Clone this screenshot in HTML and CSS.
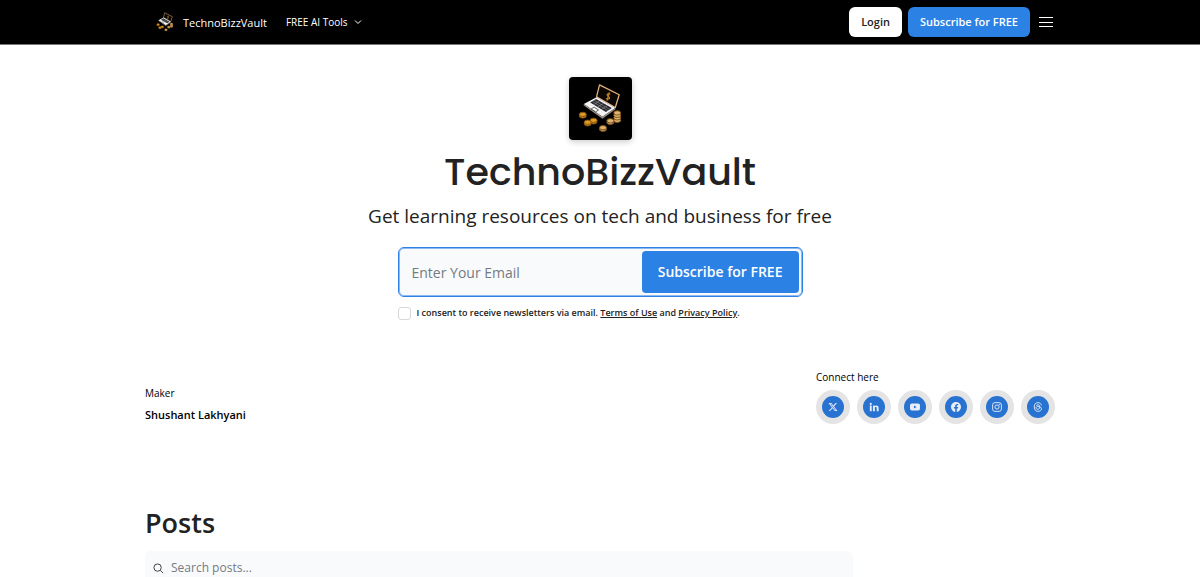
FILE: index.html
```html
<!DOCTYPE html>
<html lang="en">
  <head>
    <meta charset="UTF-8" />
    <meta name="viewport" content="width=device-width, initial-scale=1.0" />
    <title>TechnoBizzVault</title>
    <link rel="stylesheet" href="styles.css">
  </head>
  <body>
    <svg class="sprite" aria-hidden="true">
      <symbol id="laptop" viewBox="0 0 64 64">
        <path d="M31 8 51 18 47 31 28 20z" fill="#0b0704" stroke="#e3b27c" stroke-width="1.3" stroke-linejoin="round" />
        <path d="M42 17.500c-3-1.600-4.500 1-2 2.300s1 3.800-2.500 2M41 15.500l-2.400 8.500" fill="none" stroke="#c4801f" stroke-width="1.200" />
        <path d="M28 20.500 47 31.500 34 40.500 15 27.500z" fill="#f4f4f4" />
        <path d="M15 27.500v1.500L34 42.500 47 33v-1.500L34 40.500z" fill="#9a8d80" />
        <path d="M27.500 22.300 43.500 31.500 37.500 35.500 21.500 26z" fill="#26262c" />
        <path d="M25.500 23.600 41.500 33M23.600 24.800 39.500 34.200M31 24.400l-6 3.900M35 26.700l-6 3.900M39 29l-6 3.900" stroke="#aaa" stroke-width=".5" />
        <path d="M25.500 30.600 30 33.500 27 35.500 22.500 32.500z" fill="none" stroke="#444" stroke-width=".8" />
        <g fill="#dc9d28" stroke="#87500b" stroke-width="1">
          <ellipse cx="14" cy="39.500" rx="3.500" ry="2.200" />
          <ellipse cx="14" cy="38" rx="3.500" ry="2.200" />
          <ellipse cx="25" cy="45.500" rx="3.500" ry="2.200" />
          <ellipse cx="25" cy="44" rx="3.500" ry="2.200" />
          <ellipse cx="19" cy="47.500" rx="3.500" ry="2.200" />
          <ellipse cx="19" cy="46" rx="3.500" ry="2.200" />
        </g>
        <g fill="#ddb470" stroke="#80521a" stroke-width="1">
          <ellipse cx="49" cy="44" rx="3.500" ry="2.200" />
          <ellipse cx="49" cy="41.500" rx="3.500" ry="2.200" />
          <ellipse cx="49" cy="39" rx="3.500" ry="2.200" />
          <ellipse cx="49" cy="36.500" rx="3.500" ry="2.200" />
          <ellipse cx="42" cy="46" rx="3.500" ry="2.200" />
          <ellipse cx="42" cy="44.500" rx="3.500" ry="2.200" />
          <ellipse cx="34.500" cy="53" rx="3.500" ry="2.200" />
          <ellipse cx="34.500" cy="51.500" rx="3.500" ry="2.200" />
        </g>
      </symbol>
    </svg>

    <header class="topbar">
      <nav class="container nav">
        <a class="brand" href="#">
          <svg class="brand-logo" viewBox="9 6 46 52" aria-hidden="true"><use href="#laptop" width="64" height="64" /></svg>
          TechnoBizzVault
        </a>
        <button class="nav-menu" type="button">
          FREE AI Tools
          <svg viewBox="0 0 8 8" aria-hidden="true"><path d="M1 2.500 4 5.500 7 2.500" /></svg>
        </button>
        <div class="nav-actions">
          <a class="btn btn-light" href="#">Login</a>
          <a class="btn btn-blue" href="#">Subscribe for FREE</a>
          <button class="burger" type="button" aria-label="Menu">
            <svg viewBox="0 0 16 12" aria-hidden="true"><path d="M1 1.500h14M1 6.500h14M1 10.500h14" /></svg>
          </button>
        </div>
      </nav>
    </header>

    <main>
      <section class="hero">
        <svg class="hero-logo" role="img" aria-label="TechnoBizzVault"><use href="#laptop" /></svg>
        <h1>TechnoBizzVault</h1>
        <p class="tagline">Get learning resources on tech and business for free</p>
        <form class="signup">
          <div class="field">
            <input type="email" placeholder="Enter Your Email" aria-label="Enter Your Email" />
            <button type="submit">Subscribe for FREE</button>
          </div>
          <div class="consent">
            <input type="checkbox" id="consent" />
            <label for="consent">I consent to receive newsletters via email. <a href="#">Terms of Use</a> and <a href="#">Privacy Policy</a>.</label>
          </div>
        </form>
      </section>

      <section class="container about">
        <div class="maker">
          <p class="small">Maker</p>
          <p class="name">Shushant Lakhyani</p>
        </div>
        <div class="connect">
          <p class="small">Connect here</p>
          <div class="socials">
            <a href="#" aria-label="X">
              <svg viewBox="0 0 24 24"><path d="M18.244 2.250h3.308l-7.227 8.260 8.502 11.240H16.170l-5.214-6.817L4.990 21.750H1.680l7.730-8.835L1.254 2.250H8.080l4.713 6.231zm-1.161 17.520h1.833L7.084 4.126H5.117z" /></svg>
            </a>
            <a href="#" aria-label="LinkedIn">
              <svg viewBox="0 0 24 24"><path d="M2 8.500h4.500V22H2zM4.250 2a2.500 2.500 0 1 1 0 5 2.500 2.500 0 0 1 0-5zM9.500 8.500h4.300v1.900c.8-1.400 2.300-2.200 4.200-2.200 3.600 0 5 2.200 5 6V22h-4.500v-7c0-1.900-.6-3-2.100-3-1.700 0-2.400 1.200-2.400 3.100V22H9.500z" /></svg>
            </a>
            <a href="#" aria-label="YouTube">
              <svg viewBox="0 0 24 24"><path d="M23.500 6.200a3 3 0 0 0-2.100-2.100C19.500 3.500 12 3.500 12 3.500s-7.500 0-9.400.6A3 3 0 0 0 .5 6.200C0 8 0 12 0 12s0 4 .5 5.800a3 3 0 0 0 2.100 2.100c1.900.6 9.400.6 9.400.6s7.500 0 9.400-.6a3 3 0 0 0 2.100-2.100C24 16 24 12 24 12s0-4-.5-5.800zM9.500 15.600V8.400l6.300 3.600z" /></svg>
            </a>
            <a href="#" aria-label="Facebook">
              <svg viewBox="0 0 24 24"><path d="M24 12.070C24 5.400 18.630 0 12 0S0 5.400 0 12.070C0 18.100 4.390 23.100 10.130 24v-8.440H7.080v-3.490h3.050V9.410c0-3.020 1.790-4.690 4.530-4.690 1.310 0 2.680.24 2.680.24v2.970h-1.510c-1.490 0-1.960.93-1.960 1.890v2.250h3.330l-.53 3.490h-2.800V24C19.610 23.100 24 18.100 24 12.070z" /></svg>
            </a>
            <a href="#" aria-label="Instagram">
              <svg viewBox="0 0 24 24"><g fill="none" stroke="currentColor" stroke-width="2.200"><rect x="1.500" y="1.500" width="21" height="21" rx="5.500" /><circle cx="12" cy="12" r="5" /></g><circle cx="18" cy="6" r="1.500" /></svg>
            </a>
            <a href="#" aria-label="Threads">
              <svg viewBox="0 0 24 24"><path d="M20.300 8C19.200 3.900 16.500 1.600 12 1.600 6 1.600 3 5.500 3 12s3 10.400 9 10.400c4.800 0 8.300-2.500 8.300-6 0-3.800-3.500-5.500-7.800-5.500-3.300 0-5.200 1.300-5.200 3.400 0 1.900 1.700 3.100 4 3.100 3 0 4.800-1.900 4.800-5.500 0-3.400-1.500-5.100-4.300-5.100-1.800 0-3.200.7-4 2" fill="none" stroke="currentColor" stroke-width="2.200" /></svg>
            </a>
          </div>
        </div>
      </section>

      <section class="container posts">
        <h2>Posts</h2>
        <label class="search">
          <svg viewBox="0 0 12 12" aria-hidden="true"><path d="M5 1a4 4 0 1 1 0 8 4 4 0 0 1 0-8zM8 8l3 3" /></svg>
          <input type="search" placeholder="Search posts..." aria-label="Search posts" />
        </label>
      </section>
    </main>
  </body>
</html>
```
FILE: styles.css
```css
* {
  margin: 0;
  padding: 0;
  box-sizing: border-box;
}
body {
  background: #fff;
  color: #222;
  font-family: "Open Sans", sans-serif;
}
a {
  color: inherit;
  text-decoration: none;
}
button,
input {
  font: inherit;
  border: 0;
  background: none;
}
button {
  cursor: pointer;
}
.sprite {
  display: none;
}
.container {
  max-width: 912px;
  margin: 0 auto;
}

/* top bar */
.topbar {
  background: #000;
  color: #fff;
  border-bottom: 1px solid #777;
}
.nav {
  display: flex;
  align-items: center;
  padding: 7px 0 7px 12px;
}
.brand {
  display: flex;
  align-items: center;
  gap: 9px;
  font-size: 11px;
  font-weight: 500;
}
.brand-logo {
  width: 18px;
  height: 20px;
}
.nav-menu {
  display: flex;
  align-items: center;
  gap: 6px;
  margin-left: 19px;
  color: #fff;
  font-size: 10px;
}
.nav-menu svg {
  width: 8px;
  height: 8px;
  fill: none;
  stroke: #fff;
}
.nav-actions {
  display: flex;
  align-items: center;
  gap: 6px;
  margin-left: auto;
}
.btn {
  padding: 0 12px;
  border-radius: 6px;
  font-size: 11px;
  font-weight: 600;
  line-height: 30px;
}
.btn-light {
  background: #fff;
  color: #222;
}
.btn-blue {
  background: #2c81e5;
}
.burger {
  padding: 2px;
}
.burger svg {
  display: block;
  width: 16px;
  height: 12px;
  stroke: #fff;
}

/* hero */
.hero {
  display: flex;
  flex-direction: column;
  align-items: center;
  padding-top: 32px;
}
.hero-logo {
  width: 63px;
  height: 63px;
  border-radius: 4px;
  background: #000;
  box-shadow: 0 2px 6px rgba(0, 0, 0, 0.2);
}
h1 {
  margin-top: 8px;
  font-family: Poppins, Inter, sans-serif;
  font-size: 38px;
  font-weight: 500;
  line-height: 48px;
}
.tagline {
  margin-top: 6px;
  font-size: 19px;
  line-height: 28px;
}
.signup {
  width: 405px;
  max-width: 100%;
  margin-top: 17px;
}
.field {
  display: flex;
  padding: 3px;
  border: 1px solid #2c81e5;
  border-radius: 6px;
  background: #f9fafb;
  box-shadow: inset 0 0 0 1px #8bb9f0;
}
.field input {
  flex: 1;
  min-width: 0;
  padding-left: 10px;
  font-size: 14px;
  outline: 0;
}
.field input::placeholder,
.search input::placeholder {
  color: #757b82;
}
.field button {
  padding: 0 16px;
  border-radius: 4px;
  background: #2c81e5;
  color: #fff;
  font-size: 14px;
  font-weight: 600;
  line-height: 42px;
}
.consent {
  display: flex;
  align-items: center;
  gap: 6px;
  margin-top: 9px;
  font-size: 9px;
  font-weight: 600;
  line-height: 14px;
}
.consent input {
  appearance: none;
  width: 13px;
  height: 13px;
  border: 1px solid #d5d8dc;
  border-radius: 3px;
}
.consent a {
  text-decoration: underline;
}

/* maker and social links */
.about {
  display: flex;
  justify-content: space-between;
  align-items: flex-end;
  margin-top: 50px;
  padding: 0 1px;
}
.small {
  color: #000;
  font-size: 10px;
  line-height: 14px;
}
.name {
  margin-top: 6px;
  color: #000;
  font-size: 11px;
  font-weight: 600;
  line-height: 18px;
}
.socials {
  display: flex;
  gap: 7px;
  margin-top: 6px;
}
.socials a {
  display: grid;
  place-items: center;
  width: 34px;
  height: 34px;
  border: 6px solid #e4e4e4;
  border-radius: 50%;
  background: #2872d1;
  color: #e9eef5;
}
.socials svg {
  width: 10px;
  height: 10px;
  fill: currentColor;
}

/* posts */
.posts {
  margin-top: 80px;
  padding-left: 1px;
}
h2 {
  font-size: 27px;
  font-weight: 600;
  line-height: 38px;
}
.search {
  display: flex;
  align-items: center;
  gap: 7px;
  width: 708px;
  max-width: 100%;
  margin-top: 9px;
  padding: 8px;
  border-radius: 6px;
  background: #f9fafb;
}
.search svg {
  width: 11px;
  height: 11px;
  fill: none;
  stroke: #333;
}
.search input {
  flex: 1;
  font-size: 12px;
  line-height: 18px;
  outline: 0;
}
```
